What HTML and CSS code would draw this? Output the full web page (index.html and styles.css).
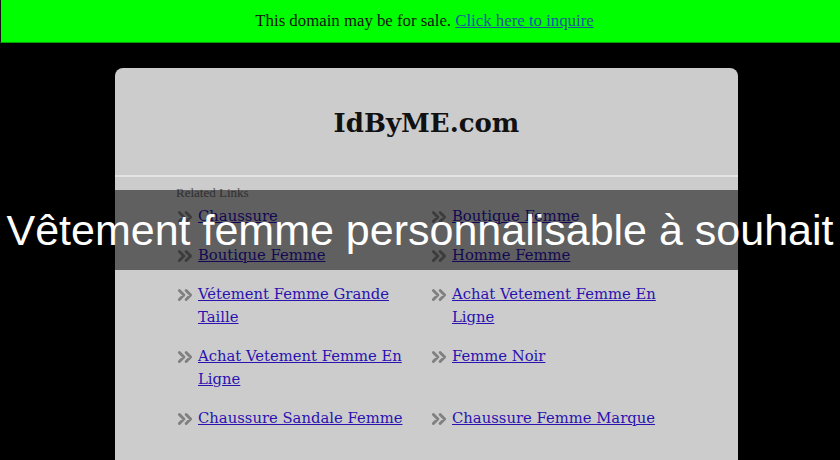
FILE: index.html
```html
<!DOCTYPE html>
<html>
<head>
<meta charset="utf-8">
<link rel="stylesheet" href="styles.css">
</head>
<body>
<div class="salebar">This domain may be for sale. <a href="#">Click here to inquire</a></div>
<div class="card">
  <div class="card-head"><h1>IdByME.com</h1></div>
  <div class="card-body">
    <div class="related">Related Links</div>
    <ul class="links">
      <li><svg class="chev" viewBox="0 0 16 14"><path d="M3 3l4 4-4 4M9 3l4 4-4 4"/></svg><a href="#">Chaussure</a></li>
      <li><svg class="chev" viewBox="0 0 16 14"><path d="M3 3l4 4-4 4M9 3l4 4-4 4"/></svg><a href="#">Boutique Femme</a></li>
      <li><svg class="chev" viewBox="0 0 16 14"><path d="M3 3l4 4-4 4M9 3l4 4-4 4"/></svg><a href="#">Boutique Femme</a></li>
      <li><svg class="chev" viewBox="0 0 16 14"><path d="M3 3l4 4-4 4M9 3l4 4-4 4"/></svg><a href="#">Homme Femme</a></li>
      <li><svg class="chev" viewBox="0 0 16 14"><path d="M3 3l4 4-4 4M9 3l4 4-4 4"/></svg><a href="#">Vétement Femme Grande Taille</a></li>
      <li><svg class="chev" viewBox="0 0 16 14"><path d="M3 3l4 4-4 4M9 3l4 4-4 4"/></svg><a href="#">Achat Vetement Femme En Ligne</a></li>
      <li><svg class="chev" viewBox="0 0 16 14"><path d="M3 3l4 4-4 4M9 3l4 4-4 4"/></svg><a href="#">Achat Vetement Femme En Ligne</a></li>
      <li><svg class="chev" viewBox="0 0 16 14"><path d="M3 3l4 4-4 4M9 3l4 4-4 4"/></svg><a href="#">Femme Noir</a></li>
      <li><svg class="chev" viewBox="0 0 16 14"><path d="M3 3l4 4-4 4M9 3l4 4-4 4"/></svg><a href="#">Chaussure Sandale Femme</a></li>
      <li><svg class="chev" viewBox="0 0 16 14"><path d="M3 3l4 4-4 4M9 3l4 4-4 4"/></svg><a href="#">Chaussure Femme Marque</a></li>
    </ul>
  </div>
</div>
<div class="overlay">Vêtement femme personnalisable à souhait</div>
</body>
</html>
```
FILE: styles.css
```css
html, body {
  margin: 0;
  padding: 0;
  background: #000;
  height: 100%;
  overflow: hidden;
}
.salebar {
  height: 42px;
  line-height: 42px;
  background: #00ff00;
  border-bottom: 1px solid #0a9a0a;
  border-left: 1px solid #111;
  text-align: center;
  font-family: "Liberation Serif", serif;
  font-size: 16.8px;
  color: #111;
  padding-left: 8px;
}
.salebar a {
  color: #1a55a0;
  text-decoration: underline;
}
.card {
  margin: 25px 0 0 115px;
  width: 623px;
  background: #cccccc;
  border-radius: 8px 8px 0 0;
  height: 392px;
}
.card-head {
  height: 107px;
  display: flex;
  align-items: center;
  justify-content: center;
  border-bottom: 2px solid #e4e4e4;
}
.card-head h1 {
  margin: 2px 0 0 0;
  font-family: "DejaVu Serif", serif;
  font-weight: bold;
  font-size: 26px;
  color: #111;
}
.card-body {
  padding: 9px 0 0 61px;
}
.related {
  font-family: "Liberation Serif", serif;
  font-size: 13px;
  color: #666;
  line-height: 14px;
}
.links {
  list-style: none;
  margin: 4px 0 0 0;
  padding: 0;
  display: grid;
  grid-template-columns: 254px 254px;
  row-gap: 16px;
}
.links li {
  display: flex;
  align-items: flex-start;
  font-family: "DejaVu Serif", serif;
  font-size: 14.8px;
  line-height: 23px;
}
.chev {
  width: 18px;
  height: 16px;
  margin: 5px 4px 0 0;
  flex: none;
  fill: none;
  stroke: #808080;
  stroke-width: 2.6;
  stroke-linecap: round;
  stroke-linejoin: round;
}
.links a {
  color: #2a12b0;
  text-decoration: underline;
  max-width: 222px;
}
.overlay {
  position: absolute;
  left: 0;
  top: 190px;
  width: 100%;
  height: 80px;
  line-height: 80px;
  background: rgba(0, 0, 0, 0.53);
  color: #fff;
  text-align: center;
  font-family: "Liberation Sans", Arial, sans-serif;
  font-size: 43px;
  white-space: nowrap;
}
```
